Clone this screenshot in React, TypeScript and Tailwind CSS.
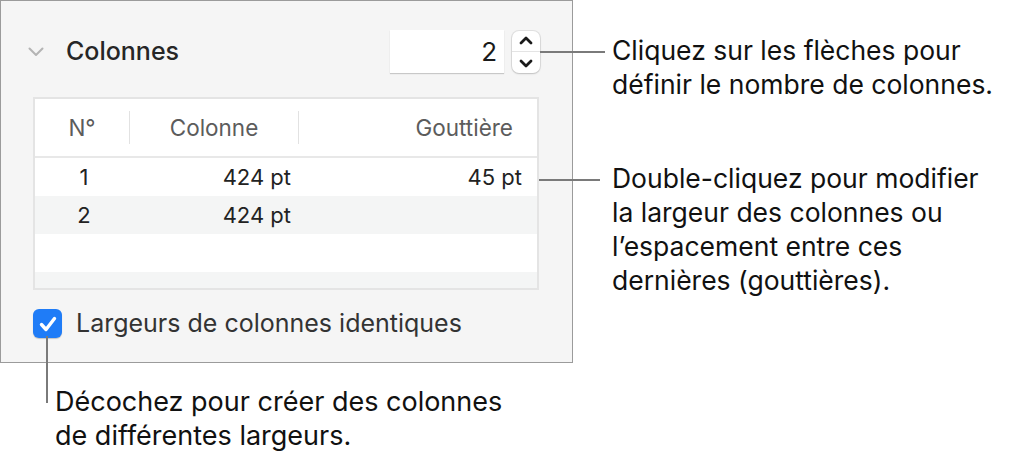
import React from 'react';

const rows = [
  { n: '1', col: '424 pt', gut: '45 pt', bg: 'bg-white' },
  { n: '2', col: '424 pt', gut: '', bg: 'bg-[#f4f5f5]' },
  { n: '', col: '', gut: '', bg: 'bg-white' },
];

const Stepper = () => (
  <div className="ml-2 flex h-[42px] w-[28px] flex-col items-center justify-between rounded-[7px] bg-white py-[5px] shadow-[0_0_0_1px_rgba(0,0,0,0.08),0_1px_2px_rgba(0,0,0,0.15)]">
    <svg width="14" height="9" viewBox="0 0 14 9">
      <path d="M2 7 L7 2 L12 7" fill="none" stroke="#1a1a1a" strokeWidth="2.8" strokeLinecap="round" strokeLinejoin="round" />
    </svg>
    <div className="h-px w-full bg-[#e4e4e4]" />
    <svg width="14" height="9" viewBox="0 0 14 9">
      <path d="M2 2 L7 7 L12 2" fill="none" stroke="#1a1a1a" strokeWidth="2.8" strokeLinecap="round" strokeLinejoin="round" />
    </svg>
  </div>
);

const App = () => {
  return (
    <div className="relative flex h-[463px] w-[1013px] overflow-hidden bg-white font-['Inter',sans-serif] text-[#111]">
      {/* left: inspector panel + bottom callout */}
      <div className="flex w-[573px] shrink-0 flex-col">
        <div className="h-[363px] border border-[#9b9b9b] bg-[#f5f5f5] pl-[32px] pr-[32px] pt-[29px]">
          <div className="flex h-[43px] items-center">
            <svg width="16" height="10" viewBox="0 0 16 10" className="-ml-[5px]">
              <path d="M1.5 1.5 L8 8 L14.5 1.5" fill="none" stroke="#b4b4b4" strokeWidth="2" strokeLinecap="round" strokeLinejoin="round" />
            </svg>
            <span className="ml-[22px] text-[25px] font-medium text-[#262626]">Colonnes</span>
            <div className="ml-auto flex items-center">
              <div className="flex h-[43px] w-[114px] items-center justify-end bg-white pr-[7px] text-[26px] text-[#1a1a1a] shadow-[0_1px_1px_rgba(0,0,0,0.18)]">
                2
              </div>
              <Stepper />
            </div>
          </div>

          <div className="mt-[24px] h-[193px] w-[506px] overflow-hidden border-2 border-[#e4e4e4] bg-[#f4f5f5]">
            <div className="flex h-[59px] items-center border-b-2 border-[#e8e8e8] bg-white text-[22.5px] text-[#5c5c5c]">
              <div className="w-[94px] text-center">N°</div>
              <div className="h-[33px] w-px bg-[#e2e2e2]" />
              <div className="w-[168px] text-center">Colonne</div>
              <div className="h-[33px] w-px bg-[#e2e2e2]" />
              <div className="flex-1 pr-[24px] text-right">Gouttière</div>
            </div>
            {rows.map((r, i) => (
              <div key={i} className={`flex h-[38px] items-center text-[22px] text-[#222] ${r.bg}`}>
                <div className="w-[102px] pr-[4px] text-center">{r.n}</div>
                <div className="w-[154px] text-right">{r.col}</div>
                <div className="flex-1 pr-[15px] text-right">{r.gut}</div>
              </div>
            ))}
          </div>

          <div className="mt-[15px] flex items-center">
            <div className="flex h-[29px] w-[29px] items-center justify-center rounded-[6px] bg-[#1f7cf7] shadow-[0_1px_1px_rgba(0,0,0,0.2)]">
              <svg width="20" height="18" viewBox="0 0 20 18">
                <path d="M3.5 9.5 L8 14.5 L16.5 3.5" fill="none" stroke="#fff" strokeWidth="3.4" strokeLinecap="round" strokeLinejoin="round" />
              </svg>
            </div>
            <span className="ml-[14px] text-[25px] text-[#333]">Largeurs de colonnes identiques</span>
          </div>
        </div>

        <p className="ml-[55px] mt-[22px] whitespace-nowrap text-[27px] leading-[34px]">
          Décochez pour créer des colonnes
          <br />
          de différentes largeurs.
        </p>
      </div>

      {/* right: callouts */}
      <div className="flex flex-col whitespace-nowrap pl-[39px]">
        <p className="mt-[33px] text-[26.5px] leading-[34px]">
          Cliquez sur les flèches pour
          <br />
          définir le nombre de colonnes.
        </p>
        <p className="mt-[60px] text-[26.5px] leading-[34px]">
          Double-cliquez pour modifier
          <br />
          la largeur des colonnes ou
          <br />
          l’espacement entre ces
          <br />
          dernières (gouttières).
        </p>
      </div>

      {/* leader lines */}
      <div className="absolute left-[540px] top-[51px] h-[2px] w-[65px] bg-[#7a7a7a]" />
      <div className="absolute left-[539px] top-[179px] h-[2px] w-[61px] bg-[#7a7a7a]" />
      <div className="absolute left-[46px] top-[336px] h-[67px] w-[2px] bg-[#7a7a7a]" />
    </div>
  );
};

export default App;
